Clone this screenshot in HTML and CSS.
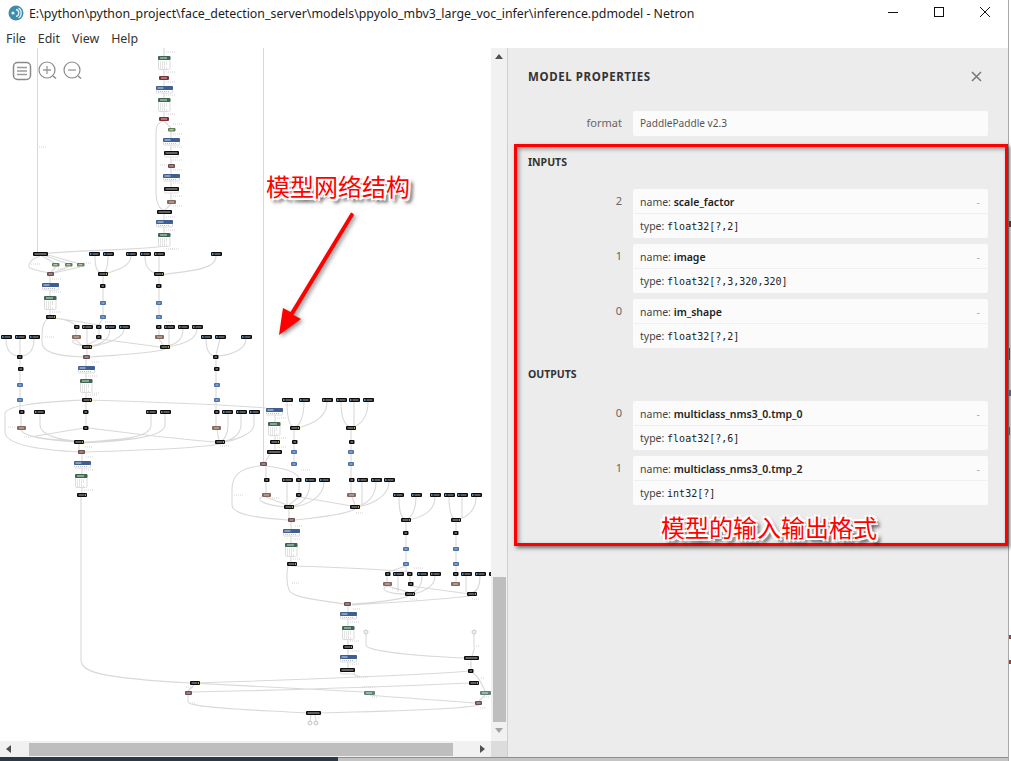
FILE: index.html
```html
<!DOCTYPE html>
<html lang="en">
<head>
<meta charset="utf-8">
<title>Netron</title>
<link rel="stylesheet" href="styles.css">
</head>
<body>
<div class="screen">
<div class="window">
  <header class="titlebar">
    <svg class="app-icon" width="16" height="16" viewBox="0 0 16 16"><circle cx="8" cy="8" r="7.5" fill="#3d8cab"/><circle cx="5" cy="8" r="1.6" fill="#dff0f5"/><path d="M8 4.5a3.6 3.6 0 0 1 0 7M10.500 3a6 6 0 0 1 0 10" fill="none" stroke="#dff0f5" stroke-width="1.300"/></svg>
    <span class="title-text">E:\python\python_project\face_detection_server\models\ppyolo_mbv3_large_voc_infer\inference.pdmodel - Netron</span>
    <div class="win-controls">
      <svg width="12" height="12" viewBox="0 0 12 12"><path d="M1 6.500h10" stroke="#111" fill="none"/></svg>
      <svg width="12" height="12" viewBox="0 0 12 12"><rect x="1.500" y="1.500" width="9" height="9" stroke="#111" fill="none"/></svg>
      <svg width="12" height="12" viewBox="0 0 12 12"><path d="M1 1l10 10M11 1L1 11" stroke="#111" fill="none"/></svg>
    </div>
  </header>
  <nav class="menubar"><span>File</span><span>Edit</span><span>View</span><span>Help</span></nav>
  <main class="main">
    <section class="viewer">
      <div class="canvas">
        <svg class="graph" width="491" height="693" viewBox="0 48 491 693">
          <defs>
            <g id="i"><rect width="11" height="4" rx="1" fill="#0c0c0c"/><rect x="1" y="1" width="1.500" height="2" fill="#5a90c8"/><rect x="3.500" y="1.500" width="6" height="1" fill="#a8a8a8"/></g>
            <g id="s"><rect width="5.500" height="4" rx="1" fill="#0c0c0c"/><rect x="1.500" y="1.500" width="2.500" height="1" fill="#b0b0b0"/></g>
            <g id="c"><rect width="10" height="4" rx="1" fill="#0c0c0c"/><rect x="1.500" y="1.500" width="6" height="1" fill="#b0b0b0"/><rect x="8" y="1" width="1" height="2" fill="#b89a40"/></g>
            <g id="w"><rect width="15" height="4" rx="1" fill="#0c0c0c"/><rect x="1.500" y="1.500" width="12" height="1" fill="#b8b8b8"/></g>
            <g id="b"><rect width="6" height="4" rx="1" fill="#4a72a8"/><rect x="1.500" y="1.500" width="3" height="1" fill="#b5c8e0"/></g>
            <g id="r"><rect width="7" height="4" rx="1" fill="#6b4f50"/><rect x="1.500" y="1.500" width="4" height="1" fill="#c8b8b8"/></g>
            <g id="t"><rect width="9" height="4" rx="1" fill="#86695f"/><rect x="2" y="1.500" width="5" height="1" fill="#d0c4bc"/></g>
            <g id="d"><rect width="10" height="4" rx="1" fill="#7c3234"/><rect x="2" y="1.500" width="6" height="1" fill="#d6baba"/></g>
            <g id="v"><rect width="7.500" height="3.500" rx="1" fill="#5f7d50"/><rect x="1.500" y="1.300" width="4" height="1" fill="#dce6d4"/></g>
            <g id="n"><rect width="11" height="4" rx="1" fill="#5f8573"/><rect x="2" y="1.500" width="6" height="1" fill="#d8e6de"/></g>
            <g id="u"><rect x=".5" y=".5" width="16" height="6.500" rx="1" fill="#fff" stroke="#dcdcdc"/><rect width="17" height="4" rx="1" fill="#3f5f92"/><rect x="1.500" y="1.500" width="6" height="1" fill="#d0dcec"/><path d="M2 5.500h12" stroke="#c0c0c0" stroke-dasharray="1 1"/></g>
            <g id="g"><rect x=".5" y=".5" width="11.500" height="13" rx="1.500" fill="#fff" stroke="#dcdcdc"/><rect width="12.500" height="4" rx="1" fill="#3f6650"/><rect x="2" y="1.500" width="7" height="1" fill="#d4e2da"/><path d="M2 6h7M2 8h7M2 10h6M2 12h7" stroke="#c8c8c8" stroke-dasharray="1 1"/></g>
            <g id="k"><rect x=".5" y=".5" width="14" height="5.500" rx="1" fill="#fff" stroke="#dcdcdc"/><rect width="15" height="4" rx="1" fill="#0c0c0c"/><rect x="1.500" y="1.500" width="12" height="1" fill="#b8b8b8"/></g>
          </defs>
          <path class="edge" d="M37.500 48V252M263.500 48V462M164 48V56M164 69V76M164 80V86M164 92V98M164 111V117M164 121L171 128M171 131V200M164 121C156 123 156 128 156 135V193C156 203 160 210 164 210M171 204L165 210M164 214V220M164 227V233M164 246C150 250 70 250 40 254"/>
          <path class="edge" d="M40 256C28 260 28 266 30 268C34 270 44 272 50 273M42 256L56 264M46 256L68 264M48 255L80 264M56 267L51 272M68 267L52 273M80 267L54 273M50 275V283M50 289V296M50 309V315M95 256C95 268 97 272 102 274M108 256C108 268 106 272 103 274M131 256C131 266 118 270 105 274M145 256C145 268 150 272 158 274M159 256V273M216 256C216 268 200 270 160 275M103 276V315M159 276V315"/>
          <path class="edge" d="M50 318C42 320 42 330 42 342C42 352 55 356 84 357M55 318C70 320 70 322 76 325M55 318L99 325M103 318L99 325M76 329V335M99 329V335M87 329V345M110 329C110 340 100 345 90 346M124 329C124 340 100 345 90 347M76 339C78 342 82 346 85 346M99 339L87 345M76 340C66 342 80 346 87 346M99 339L160 347M159 329V335M169 329V345M183 329C183 340 175 345 165 346M197 329C197 340 180 345 166 347M159 339L163 345M87 349V355M165 349C160 352 120 355 90 357"/>
          <path class="edge" d="M6 339C6 350 10 355 18 356M20 339V355M34 339C34 350 30 355 22 356M206 339C206 350 210 355 214 356M220 339L216 355M246 339C246 350 230 355 218 356M20 359V400M216 359V400M86 359V366M86 373V379M86 392V398"/>
          <path class="edge" d="M82 400C50 402 5 404 5 414V432C5 445 40 450 80 452M91 400C150 402 220 404 266 408M20 402V410M216 402V410M86 402V410M21 414V426M86 414V426M216 414V426M21 430C25 438 50 440 76 441M40 414V425C40 435 60 440 76 441M84 428L36 436C32 438 50 440 76 442M89 428C120 432 190 440 215 442M151 414V425C151 438 120 440 84 442M165 414V425C165 438 120 441 84 443M217 430L219 440M228 414V425C228 435 224 440 221 441M241 414V425C241 435 230 441 224 441M254 414V425C254 435 230 441 225 442M79 444V450M220 444C200 448 120 451 85 452M82 454V461M82 467V474M82 487V493M81 497V660C81 672 100 678 190 683"/>
          <path class="edge" d="M275 415V422M275 435V440M275 444V450M270 454L265 462M260 466C240 468 232 475 232 490V505C232 515 260 518 288 520M267 466C280 468 295 470 299 478M266 466V478M266 482V493M287 482V505M299 482V493M310 482C310 498 300 505 292 506M324 482C324 498 305 506 292 507M299 497L289 505M266 497L287 505M299 497L352 506M262 497C255 500 265 505 285 507"/>
          <path class="edge" d="M287 402C287 418 290 425 293 427M304 402C304 418 299 425 296 427M327 402C327 418 310 425 297 428M341 402C341 418 345 425 350 427M354 402V426M368 402C368 418 360 425 353 427M294 430V462M351 430V462M351 466V478M351 482V493M362 482V505M376 482C376 498 365 505 357 506M389 482C389 498 368 505 358 507M352 497L355 505M289 509V518M355 509C345 515 315 518 295 520M291 522V529M291 536V543M291 556V562"/>
          <path class="edge" d="M291 566C360 568 390 570 410 572M288 566C286 575 287 585 289 590C292 598 320 600 344 604M399 497C399 515 402 518 405 519M416 497C416 512 410 518 407 519M435 497C435 512 420 518 408 520M449 497C449 512 452 518 455 519M462 497V518M476 497C476 512 465 518 457 520M406 522V572M456 522V572M406 566L388 572M387 576V582M410 576V582M398 576V592M422 576C422 588 415 592 411 593M435 576C435 588 420 593 412 594M456 576V582M466 576V592M480 576C480 588 475 592 472 593M410 586L470 594M387 586C378 590 390 594 405 594M387 586L408 592M409 596C400 600 370 603 352 604M470 596C440 600 380 603 352 605"/>
          <path class="edge" d="M348 606V612M348 619V626M348 639V645M348 649V655M348 662V668M366 634V645C366 650 400 655 464 658M474 634V650L472 656M471 660V669M353 674L360 677M468 671C430 675 340 678 199 683M473 673C478 677 480 680 485 691M469 683C400 686 300 690 192 692M190 683C250 686 320 690 364 692M194 685L188 691M370 695C400 698 440 700 475 703M188 695V702C188 708 260 710 306 713M479 705C470 708 400 711 320 713M311 715L310 721M315 715L316 721M485 695L479 701"/>
          <path class="lbl" d="M166 52h9M166 72h9M166 82h9M166 95h9M166 114h9M173 124h9M173 134h9M173 147h9M173 160h9M160 165h8M173 170h9M173 183h9M173 196h9M173 206h9M166 217h9M166 230h9M166 249h9M39 147h8M170 249h9M31 264h9M84 263h7M58 269h8M52 279h9M52 292h9M52 312h9M105 322h7M166 322h8M45 337h9M86 327h4M92 362h8M88 376h9M88 395h9M92 393h8M8 427h8M24 437h8M85 447h8M220 446h9M86 457h8M84 470h9M84 490h9M285 405h7M277 418h9M277 438h9M277 447h9M301 470h9M234 495h9M272 498h7M356 513h7M295 526h8M293 539h8M293 559h8M292 583h8M414 568h9M392 589h7M410 599h8M472 599h8M353 609h8M350 622h9M350 641h9M350 651h9M350 664h9M355 677h14M476 646h3M468 664h3M481 678h3M186 687h7M362 687h14M372 697h6M484 697h5M190 703h6M480 708h6M318 718h2"/>
          <use href="#g" x="158" y="56"/><use href="#d" x="159" y="76"/><use href="#u" x="156" y="86"/><use href="#g" x="158" y="98"/><use href="#d" x="159" y="117"/><use href="#v" x="168" y="128"/><use href="#u" x="163" y="138"/><use href="#k" x="164" y="151"/><use href="#r" x="168" y="164"/><use href="#u" x="163" y="174"/><use href="#k" x="164" y="187"/><use href="#t" x="167" y="200"/><use href="#w" x="157" y="210"/><use href="#u" x="156" y="220"/><use href="#g" x="158" y="233"/>
          <use href="#w" x="33" y="252"/><use href="#i" x="89" y="252"/><use href="#i" x="103" y="252"/><use href="#i" x="126" y="252"/><use href="#i" x="140" y="252"/><use href="#i" x="154" y="252"/><use href="#i" x="211" y="252"/>
          <use href="#v" x="52" y="263"/><use href="#v" x="65" y="263"/><use href="#v" x="77" y="263"/><use href="#r" x="47" y="272"/><use href="#c" x="98" y="272"/><use href="#c" x="154" y="272"/><use href="#u" x="42" y="283"/><use href="#s" x="100" y="284"/><use href="#s" x="156" y="284"/><use href="#g" x="44" y="296"/><use href="#b" x="100" y="301"/><use href="#b" x="156" y="301"/><use href="#c" x="46" y="315"/><use href="#b" x="100" y="315"/><use href="#b" x="156" y="315"/>
          <use href="#s" x="74" y="325"/><use href="#i" x="82" y="325"/><use href="#s" x="96" y="325"/><use href="#i" x="105" y="325"/><use href="#i" x="119" y="325"/><use href="#s" x="156" y="325"/><use href="#i" x="164" y="325"/><use href="#i" x="178" y="325"/><use href="#i" x="192" y="325"/>
          <use href="#t" x="72" y="335"/><use href="#s" x="96" y="335"/><use href="#t" x="155" y="335"/><use href="#i" x="1" y="335"/><use href="#i" x="15" y="335"/><use href="#i" x="29" y="335"/><use href="#i" x="201" y="335"/><use href="#i" x="215" y="335"/><use href="#i" x="241" y="335"/>
          <use href="#c" x="82" y="345"/><use href="#c" x="160" y="345"/><use href="#s" x="17" y="355"/><use href="#r" x="83" y="355"/><use href="#s" x="213" y="355"/>
          <use href="#s" x="18" y="367"/><use href="#s" x="214" y="367"/><use href="#u" x="78" y="366"/><use href="#g" x="80" y="379"/><use href="#b" x="17" y="383"/><use href="#b" x="214" y="383"/><use href="#b" x="17" y="398"/><use href="#c" x="82" y="398"/><use href="#b" x="214" y="398"/>
          <use href="#s" x="19" y="410"/><use href="#i" x="34" y="410"/><use href="#s" x="83" y="410"/><use href="#i" x="146" y="410"/><use href="#i" x="160" y="410"/><use href="#s" x="214" y="410"/><use href="#i" x="222" y="410"/><use href="#i" x="236" y="410"/><use href="#i" x="249" y="410"/>
          <use href="#t" x="17" y="426"/><use href="#s" x="83" y="426"/><use href="#t" x="212" y="426"/><use href="#c" x="74" y="440"/><use href="#c" x="215" y="440"/><use href="#r" x="78" y="450"/><use href="#u" x="74" y="461"/><use href="#g" x="75" y="474"/><use href="#c" x="77" y="493"/>
          <use href="#u" x="266" y="408"/><use href="#g" x="268" y="422"/><use href="#c" x="270" y="440"/><use href="#w" x="267" y="450"/><use href="#r" x="260" y="462"/>
          <use href="#i" x="282" y="398"/><use href="#i" x="299" y="398"/><use href="#i" x="322" y="398"/><use href="#i" x="336" y="398"/><use href="#i" x="349" y="398"/><use href="#i" x="363" y="398"/>
          <use href="#c" x="290" y="426"/><use href="#c" x="346" y="426"/><use href="#s" x="292" y="440"/><use href="#s" x="349" y="440"/><use href="#b" x="291" y="450"/><use href="#b" x="348" y="450"/><use href="#b" x="291" y="462"/><use href="#b" x="348" y="462"/>
          <use href="#s" x="264" y="478"/><use href="#i" x="282" y="478"/><use href="#s" x="296" y="478"/><use href="#i" x="305" y="478"/><use href="#i" x="319" y="478"/><use href="#s" x="349" y="478"/><use href="#i" x="357" y="478"/><use href="#i" x="371" y="478"/><use href="#i" x="384" y="478"/>
          <use href="#t" x="262" y="493"/><use href="#s" x="296" y="493"/><use href="#t" x="347" y="493"/><use href="#i" x="393" y="493"/><use href="#i" x="411" y="493"/><use href="#i" x="430" y="493"/><use href="#i" x="444" y="493"/><use href="#i" x="457" y="493"/><use href="#i" x="471" y="493"/>
          <use href="#c" x="284" y="505"/><use href="#c" x="350" y="505"/><use href="#r" x="288" y="518"/><use href="#c" x="401" y="518"/><use href="#c" x="451" y="518"/>
          <use href="#u" x="283" y="529"/><use href="#s" x="403" y="531"/><use href="#s" x="453" y="531"/><use href="#g" x="285" y="543"/><use href="#b" x="403" y="547"/><use href="#b" x="453" y="547"/><use href="#c" x="287" y="562"/><use href="#b" x="403" y="562"/><use href="#b" x="453" y="562"/>
          <use href="#s" x="385" y="572"/><use href="#i" x="393" y="572"/><use href="#s" x="407" y="572"/><use href="#i" x="417" y="572"/><use href="#i" x="430" y="572"/><use href="#s" x="453" y="572"/><use href="#i" x="461" y="572"/><use href="#i" x="475" y="572"/><use href="#s" x="489" y="572"/>
          <use href="#t" x="383" y="582"/><use href="#s" x="408" y="582"/><use href="#t" x="451" y="582"/><use href="#c" x="405" y="592"/><use href="#c" x="467" y="592"/><use href="#r" x="344" y="602"/>
          <use href="#u" x="340" y="612"/><use href="#g" x="342" y="626"/><use href="#c" x="343" y="645"/><use href="#u" x="340" y="655"/><use href="#k" x="340" y="668"/>
          <circle class="port" cx="366" cy="632" r="2"/><circle class="port" cx="474" cy="632" r="2"/><circle class="port" cx="310" cy="723" r="2"/><circle class="port" cx="316" cy="723" r="2"/>
          <use href="#w" x="464" y="656"/><use href="#s" x="468" y="669"/><use href="#c" x="190" y="681"/><use href="#c" x="469" y="681"/><use href="#r" x="185" y="691"/><use href="#n" x="364" y="691"/><use href="#n" x="480" y="691"/><use href="#r" x="475" y="701"/><use href="#w" x="306" y="711"/>
        </svg>
        <div class="toolbar">
          <svg class="tool-list" width="20" height="20" viewBox="0 0 20 20"><rect x="1.500" y="1.500" width="17" height="17" rx="4" class="tool"/><path class="tool-thin" d="M5 6.500h10M5 10h10M5 13.500h10"/></svg>
          <svg width="20" height="20" viewBox="0 0 20 20"><circle cx="9" cy="9" r="8" class="tool-ring"/><path class="tool-thin" d="M5 9h8M9 5v8"/><path class="tool" d="M15 15l3 2.500"/></svg>
          <svg width="20" height="20" viewBox="0 0 20 20"><circle cx="9" cy="9" r="8" class="tool-ring"/><path class="tool-thin" d="M5 9h8"/><path class="tool" d="M15 15l3 2.500"/></svg>
        </div>
      </div>
      <div class="vscroll">
        <svg class="arrow" width="8" height="5" viewBox="0 0 8 5"><path d="M4 0l4 5H0z" fill="#505050"/></svg>
        <div class="vthumb"></div>
        <svg class="arrow" width="8" height="5" viewBox="0 0 8 5"><path d="M0 0h8L4 5z" fill="#a3a3a3"/></svg>
      </div>
      <div class="hscroll">
        <svg class="arrow" width="5" height="8" viewBox="0 0 5 8"><path d="M5 0v8L0 4z" fill="#505050"/></svg>
        <div class="hthumb"></div>
        <svg class="arrow" width="5" height="8" viewBox="0 0 5 8"><path d="M0 0v8l5-4z" fill="#505050"/></svg>
      </div>
      <div class="corner"></div>
    </section>
    <aside class="sidebar">
      <div class="side-head">
        <span class="side-title">MODEL PROPERTIES</span>
        <svg width="11" height="11" viewBox="0 0 11 11"><path d="M1 1l9 9M10 1l-9 9" stroke="#777" stroke-width="1.500" fill="none"/></svg>
      </div>
      <div class="prop first"><span class="prop-name">format</span><div class="box single">PaddlePaddle v2.3</div></div>
      <h2 class="heading">INPUTS</h2>
      <div class="list">
        <div class="prop"><span class="prop-name">2</span><div class="box"><div class="line"><span>name: <b>scale_factor</b></span><i>-</i></div><div class="line">type:&nbsp;<code>float32[?,2]</code></div></div></div>
        <div class="prop"><span class="prop-name">1</span><div class="box"><div class="line"><span>name: <b>image</b></span><i>-</i></div><div class="line">type:&nbsp;<code>float32[?,3,320,320]</code></div></div></div>
        <div class="prop"><span class="prop-name">0</span><div class="box"><div class="line"><span>name: <b>im_shape</b></span><i>-</i></div><div class="line">type:&nbsp;<code>float32[?,2]</code></div></div></div>
      </div>
      <h2 class="heading">OUTPUTS</h2>
      <div class="list">
        <div class="prop"><span class="prop-name">0</span><div class="box"><div class="line"><span>name: <b>multiclass_nms3_0.tmp_0</b></span><i>-</i></div><div class="line">type:&nbsp;<code>float32[?,6]</code></div></div></div>
        <div class="prop"><span class="prop-name">1</span><div class="box"><div class="line"><span>name: <b>multiclass_nms3_0.tmp_2</b></span><i>-</i></div><div class="line">type:&nbsp;<code>int32[?]</code></div></div></div>
      </div>
    </aside>
  </main>
  <div class="taskbar"><div class="task-dark"></div><div class="task-light"></div></div>
</div>
<div class="behind">
  <span class="mark m1"></span><span class="mark m2"></span><span class="mark m3"></span><span class="mark m4"></span><span class="mark m5"></span><span class="mark m6"></span>
</div>
<div class="red-box"></div>
<svg class="red-arrow" width="90" height="130" viewBox="0 0 90 130"><path d="M78 2.500L76 1.500 15.500 101 8 97 4 124 26 108 18.500 104 79 4z" fill="#f00"/></svg>
<div class="note note-a">模型网络结构</div>
<div class="note note-b">模型的输入输出格式</div>
</div>
</body>
</html>
```
FILE: styles.css
```css
* { box-sizing: border-box; }
html, body { margin: 0; height: 100%; overflow: hidden; background: #fff; }
body { font-family: "Noto Sans", "Open Sans", sans-serif; color: #222; }
.screen { position: relative; width: 1011px; height: 761px; overflow: hidden; display: flex; }
.window { width: 1009px; height: 761px; display: flex; flex-direction: column; border-right: 1px solid #a8a8a8; background: #fff; }

.titlebar { height: 26px; display: flex; align-items: center; padding-left: 8px; flex: none; }
.app-icon { flex: none; margin-right: 5px; }
.title-text { font-size: 12.37px; color: #1c1c1c; white-space: nowrap; flex: none; }
.win-controls { margin-left: auto; display: flex; gap: 34px; padding: 0 17px 2px 0; }

.menubar { height: 22px; flex: none; display: flex; gap: 12px; padding: 2px 0 0 6px; font-size: 12.4px; color: #333; align-items: center; }

.main { flex: 1; display: flex; min-height: 0; }
.viewer { width: 507px; flex: none; display: grid; grid-template-columns: 491px 16px; grid-template-rows: 693px 16px; }
.canvas { position: relative; overflow: hidden; background: #fff; }
.graph { display: block; }
.edge { fill: none; stroke: #d9d9d9; stroke-width: 1.100; }
.lbl { fill: none; stroke: #d0d0dc; stroke-width: 1; stroke-dasharray: 1 1; }
.port { fill: #f2f2f2; stroke: #c8c8c8; }
.toolbar { position: absolute; left: 12px; top: 13px; display: flex; gap: 5px; }
.tool-list { margin-right: 1px; }
.tool { fill: none; stroke: #8a8a8a; stroke-width: 1.500; }
.tool-ring { fill: #fff; stroke: #8a8a8a; stroke-width: 1.200; }
.tool-thin { fill: none; stroke: #9a9a9a; stroke-width: 1.300; }

.vscroll { background: #f1f1f1; display: flex; flex-direction: column; align-items: center; padding: 6px 0 8px; }
.vthumb { width: 13px; height: 145px; margin-top: auto; margin-bottom: 6px; background: #bebebe; }
.hscroll { background: #f1f1f1; display: flex; align-items: center; justify-content: space-between; padding: 0 6px; position: relative; }
.hthumb { position: absolute; left: 29px; width: 424px; top: 2px; height: 13px; background: #bebebe; }
.arrow { flex: none; }
.corner { background: #dcdcdc; }

.sidebar { flex: 1; background: #ececec; border-left: 1px solid #cfcfcf; padding: 20px 20px 0 20px; min-width: 0; font-size: 10.5px; }
.side-head { display: flex; justify-content: space-between; align-items: center; height: 16px; padding-right: 6px; }
.side-title { font-size: 11.5px; font-weight: 700; color: #333; letter-spacing: .6px; }
.prop { display: grid; grid-template-columns: 94px 1fr; column-gap: 11px; }
.prop.first { margin-top: 27px; }
.prop-name { text-align: right; color: #666; padding-top: 5px; line-height: 14px; font-size: 11px; }
.box { background: #fbfbfb; border-radius: 2px; color: #444; }
.box.single { height: 25px; line-height: 25px; padding-left: 7px; color: #555; font-size: 10.1px; }
.line { height: 24px; display: flex; align-items: center; justify-content: space-between; padding: 1px 7px 0; }
.line + .line { height: 25px; border-top: 1px solid #f0f0f0; justify-content: flex-start; margin: 0 1px; padding: 0 6px; }
.line b { font-weight: 600; color: #222; }
.line i { color: #aaa; font-style: normal; padding-right: 1px; }
.line code { font-family: "DejaVu Sans Mono", "Liberation Mono", monospace; font-size: 10px; color: #222; }
.heading { margin: 18px 0 19px; font-size: 10.500px; line-height: 16px; font-weight: 700; color: #333; }
.list { display: flex; flex-direction: column; gap: 6px; }

.taskbar { height: 4px; flex: none; display: flex; }
.task-dark { width: 338px; background: #293947; }
.task-light { flex: 1; background: #c4c4c4; border-top: 1px solid #8e8e8e; }

.behind { position: absolute; left: 1009px; top: 0; width: 2px; height: 761px; }
.mark { position: absolute; left: 0; width: 2px; height: 6px; }
.m1 { top: 221px; background: #8a3c3c; }
.m2 { top: 348px; background: #5a6470; height: 12px; width: 1px; }
.m3 { top: 390px; background: #7088a8; }
.m4 { top: 427px; background: #a07840; height: 8px; width: 1px; }
.m5 { top: 635px; background: #a04040; height: 4px; }
.m6 { top: 660px; background: #a04040; height: 4px; }

.red-box { position: absolute; left: 514px; top: 144px; width: 494px; height: 402px; border: 3.500px solid #f00; box-shadow: 2px 2px 4px rgba(0,0,0,.55), inset 2px 2px 4px rgba(0,0,0,.4); }
.red-arrow { position: absolute; left: 275px; top: 211px; filter: drop-shadow(2px 2px 2px rgba(0,0,0,.45)); }
.note { position: absolute; font-family: "Noto Sans CJK SC", sans-serif; font-size: 24px; line-height: 30px; color: #f00; white-space: nowrap; text-shadow: 1px 0 0 #fff, -1px 0 0 #fff, 0 1px 0 #fff, 0 -1px 0 #fff, 2px 2px 0 #fff, -2px -2px 0 #fff, 2px -2px 0 #fff, -2px 2px 0 #fff, 4px 4px 3px rgba(0,0,0,.45), 3px 4px 4px rgba(0,0,0,.35), 4px 2px 4px rgba(0,0,0,.3); }
.note-a { left: 266px; top: 171px; }
.note-b { left: 661px; top: 512px; }
```
